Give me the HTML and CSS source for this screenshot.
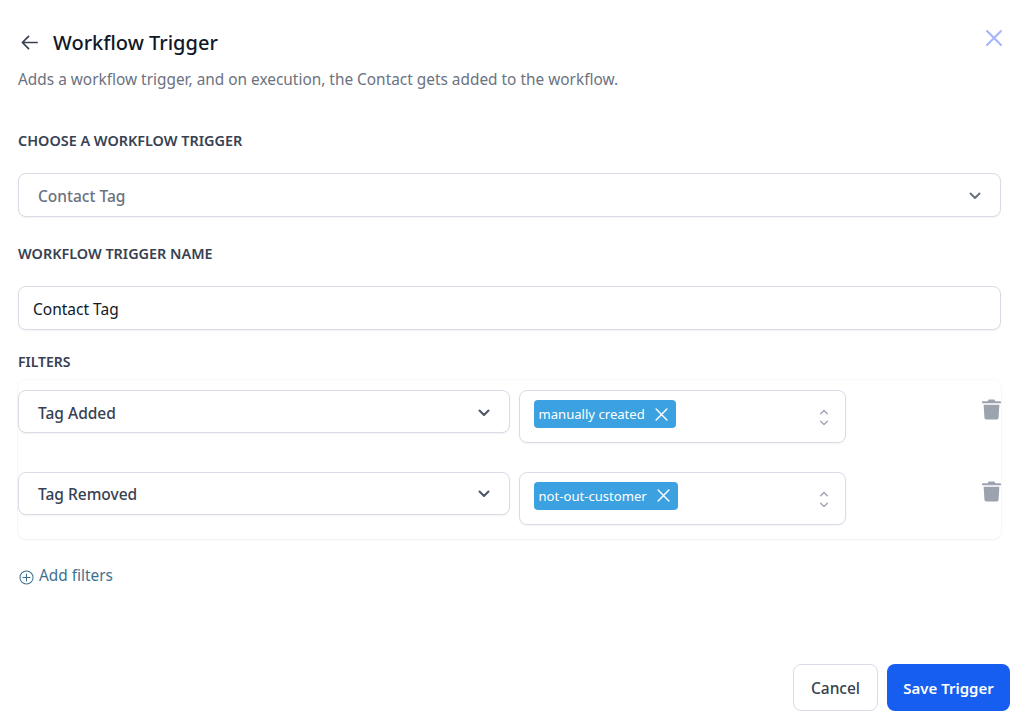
FILE: index.html
```html
<!DOCTYPE html>
<html lang="en">
  <head>
    <meta charset="utf-8">
    <title>Workflow Trigger</title>
    <link rel="stylesheet" href="styles.css">
  </head>
  <body>
    <div class="modal">
      <div class="modal-head">
        <div class="title-row">
          <svg class="back-icon" viewBox="0 0 20 20" fill="none" stroke="currentColor" stroke-width="1.8" stroke-linecap="round" stroke-linejoin="round"><path d="M9 3.5 2.5 10 9 16.5M3 10h15"/></svg>
          <h1>Workflow Trigger</h1>
        </div>
        <svg class="close-icon" viewBox="0 0 18 18" fill="none" stroke="currentColor" stroke-width="2" stroke-linecap="round"><path d="M2 2l14 14M16 2 2 16"/></svg>
      </div>
      <p class="subtitle">Adds a workflow trigger, and on execution, the Contact gets added to the workflow.</p>

      <div class="label label-first">CHOOSE A WORKFLOW TRIGGER</div>
      <div class="field select muted">
        <span>Contact Tag</span>
        <svg class="chevron" viewBox="0 0 12 8" fill="none" stroke="currentColor" stroke-width="2" stroke-linecap="round" stroke-linejoin="round"><path d="M1.5 1.5 6 6l4.5-4.5"/></svg>
      </div>

      <div class="label">WORKFLOW TRIGGER NAME</div>
      <div class="field text-input">Contact Tag</div>

      <div class="label label-filters">FILTERS</div>
      <div class="filters">
        <div class="filter-row">
          <div class="field select small">
            <span>Tag Added</span>
            <svg class="chevron" viewBox="0 0 12 8" fill="none" stroke="currentColor" stroke-width="2" stroke-linecap="round" stroke-linejoin="round"><path d="M1.5 1.5 6 6l4.5-4.5"/></svg>
          </div>
          <div class="tag-box">
            <span class="tag">manually created
              <svg viewBox="0 0 12 12" fill="none" stroke="currentColor" stroke-width="1.3" stroke-linecap="round"><path d="M1 1l10 10M11 1 1 11"/></svg>
            </span>
            <svg class="updown" viewBox="0 0 10 18" fill="none" stroke="currentColor" stroke-width="1.6" stroke-linecap="round" stroke-linejoin="round"><path d="M1.5 5 5 1.5 8.500 5M1.500 13 5 16.500 8.500 13"/></svg>
          </div>
          <svg class="trash" viewBox="0 0 20 22" fill="currentColor"><path d="M7 0.500h6l1 1.700h5a1 1 0 0 1 1 1v1.300H0V3.200a1 1 0 0 1 1-1h5zM1.700 6h16.600l-.9 14a1.700 1.700 0 0 1-1.700 1.500H4.300A1.700 1.700 0 0 1 2.600 20z"/></svg>
        </div>
        <div class="filter-row">
          <div class="field select small">
            <span>Tag Removed</span>
            <svg class="chevron" viewBox="0 0 12 8" fill="none" stroke="currentColor" stroke-width="2" stroke-linecap="round" stroke-linejoin="round"><path d="M1.5 1.5 6 6l4.5-4.5"/></svg>
          </div>
          <div class="tag-box">
            <span class="tag">not-out-customer
              <svg viewBox="0 0 12 12" fill="none" stroke="currentColor" stroke-width="1.3" stroke-linecap="round"><path d="M1 1l10 10M11 1 1 11"/></svg>
            </span>
            <svg class="updown" viewBox="0 0 10 18" fill="none" stroke="currentColor" stroke-width="1.6" stroke-linecap="round" stroke-linejoin="round"><path d="M1.5 5 5 1.5 8.500 5M1.500 13 5 16.500 8.500 13"/></svg>
          </div>
          <svg class="trash" viewBox="0 0 20 22" fill="currentColor"><path d="M7 0.500h6l1 1.700h5a1 1 0 0 1 1 1v1.300H0V3.200a1 1 0 0 1 1-1h5zM1.700 6h16.600l-.9 14a1.700 1.700 0 0 1-1.700 1.500H4.300A1.700 1.700 0 0 1 2.600 20z"/></svg>
        </div>
      </div>

      <div class="add-filters">
        <svg viewBox="0 0 16 16" fill="none" stroke="currentColor" stroke-width="1.1" stroke-linecap="round"><circle cx="8" cy="8" r="7"/><path d="M8 4.200v7.600M4.200 8h7.600"/></svg>
        <span>Add filters</span>
      </div>

      <div class="modal-foot">
        <button type="button" class="btn btn-cancel">Cancel</button>
        <button type="button" class="btn btn-save">Save Trigger</button>
      </div>
    </div>
  </body>
</html>
```

FILE: styles.css
```css
body {
  margin: 0;
  background: #fff;
  font-family: "Noto Sans", sans-serif;
  color: #111827;
}

.modal {
  width: 1024px;
  height: 717px;
  box-sizing: border-box;
  padding: 28px 14px 6px 18px;
  display: flex;
  flex-direction: column;
  overflow: hidden;
}

.modal-head {
  display: flex;
  justify-content: space-between;
  align-items: flex-start;
}

.title-row {
  display: flex;
  align-items: center;
  height: 29px;
}

.title-row h1 {
  margin: 0;
  font-size: 20px;
  font-weight: 500;
  line-height: 29px;
}

.back-icon {
  width: 19px;
  height: 19px;
  margin: 0 14.5px 0 1.5px;
  color: #374151;
}

.close-icon {
  width: 18px;
  height: 18px;
  margin-top: 1px;
  margin-right: 7px;
  color: #a5b4fc;
}

.subtitle {
  margin: 11px 0 0;
  font-size: 15.4px;
  line-height: 24px;
  color: #6b7280;
}

.label {
  margin-top: 26px;
  font-size: 14.4px;
  font-weight: 600;
  line-height: 22px;
  color: #374151;
}

.label-first {
  margin-top: 38px;
}

.label-filters {
  margin-top: 21px;
  font-size: 14px;
}

.field {
  box-sizing: border-box;
  border: 1px solid #d9dbe6;
  border-radius: 8px;
  box-shadow: 0 1px 2px rgba(0, 0, 0, 0.05);
  background: #fff;
  font-size: 15.5px;
  height: 44px;
  margin-top: 21px;
  padding-top: 2px;
  width: 983px;
  display: flex;
  align-items: center;
}

.select {
  justify-content: space-between;
  padding-left: 19px;
  padding-right: 19px;
  font-weight: 500;
  color: #374151;
}

.muted {
  color: #6b7280;
}

.text-input {
  padding-left: 14px;
}

.chevron {
  width: 12px;
  height: 8px;
  color: #4b5563;
}

.muted .chevron {
  color: #6b7280;
}

.filters {
  box-sizing: border-box;
  height: 159px;
  width: 983px;
  border-radius: 8px;
  box-shadow: 0 1px 2px rgba(0, 0, 0, 0.05), 0 0 0 1px #fafafb;
  padding-top: 10px;
  margin-top: 7px;
}

.filter-row {
  display: flex;
  align-items: flex-start;
  height: 81.5px;
}

.small {
  margin-top: 0;
  width: 492px;
  height: 43px;
  flex: none;
}

.tag-box {
  box-sizing: border-box;
  flex: none;
  width: 327px;
  height: 53px;
  margin-left: 9px;
  padding: 0 14px;
  border: 1px solid #d9dbe6;
  border-radius: 8px;
  box-shadow: 0 1px 2px rgba(0, 0, 0, 0.05);
  display: flex;
  align-items: center;
  justify-content: space-between;
}

.tag {
  display: flex;
  align-items: center;
  gap: 10px;
  height: 28px;
  box-sizing: border-box;
  padding: 0 8px 0 4.500px;
  margin-bottom: 5px;
  border-radius: 4px;
  background: #3ba1e0;
  color: #fff;
  font-size: 13.1px;
  white-space: nowrap;
}

.tag svg {
  width: 13px;
  height: 13px;
}

.updown {
  width: 10px;
  height: 17px;
  margin-top: 2px;
  margin-right: 2px;
  color: #a3a7b5;
}

.trash {
  width: 19px;
  height: 21px;
  margin: 9px 0 0 136px;
  color: #9ca3af;
}

.add-filters {
  display: flex;
  align-items: center;
  gap: 5px;
  margin-top: 26px;
  margin-left: 1px;
  font-size: 15.4px;
  line-height: 22px;
  color: #3d7191;
}

.add-filters svg {
  width: 15px;
  height: 15px;
  margin-top: 2px;
}

.modal-foot {
  margin-top: auto;
  display: flex;
  justify-content: flex-end;
  gap: 9px;
}

.btn {
  height: 47px;
  border-radius: 8px;
  font-family: inherit;
  font-size: 15px;
  font-weight: 600;
  padding: 0;
}

.btn-cancel {
  width: 85px;
  border: 1px solid #d9dbe6;
  background: #fff;
  font-size: 15.5px;
  font-weight: 500;
  color: #374151;
}

.btn-save {
  width: 123px;
  border: none;
  background: #155eef;
  color: #fff;
}
```
